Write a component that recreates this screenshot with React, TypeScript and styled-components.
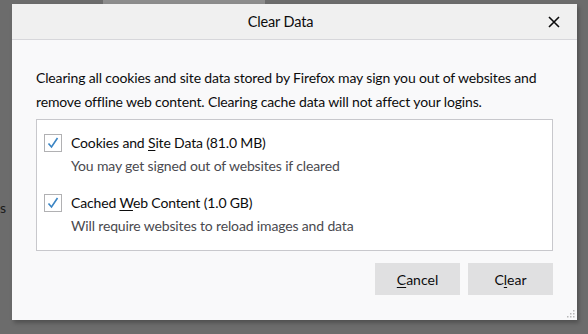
import React from "react";
import styled, { createGlobalStyle } from "styled-components";

const GlobalStyle = createGlobalStyle`
  html, body {
    margin: 0;
    padding: 0;
    background: #6c6c6c;
    overflow: hidden;
  }
  body {
    font-family: Lato, "Open Sans", sans-serif;
    letter-spacing: -0.15px;
  }
`;

const Page = styled.div`
  width: 588px;
  height: 334px;
  display: flex;
  flex-direction: column;
`;

const TopStrip = styled.div`
  height: 4px;
  display: flex;
  padding-left: 103px;
`;

const BehindButton = styled.div`
  width: 162px;
  height: 4px;
  background: #8d8d8d;
`;

const Row = styled.div`
  display: flex;
`;

const Gutter = styled.div`
  width: 12px;
  padding-top: 195px;
  color: #1a1a1a;
  font-size: 14px;
`;

const Dialog = styled.div`
  width: 565px;
  height: 316px;
  background: #f9f9fa;
  display: flex;
  flex-direction: column;
  box-shadow: 2px 3px 4px rgba(0, 0, 0, 0.25);
  position: relative;
`;

const Header = styled.div`
  flex-shrink: 0;
  height: 35px;
  padding-right: 28px;
  background: #f0f0f0;
  border-bottom: 1px solid #d7d7db;
  display: flex;
  align-items: center;
  justify-content: center;
  position: relative;
`;

const Title = styled.div`
  font-size: 14.5px;
  color: #0c0c0d;
`;

const CloseButton = styled.button`
  position: absolute;
  right: 15px;
  top: 10px;
  width: 16px;
  height: 16px;
  padding: 0;
  border: none;
  background: transparent;
  display: flex;
  align-items: center;
  justify-content: center;
`;

const Body = styled.div`
  padding: 26px 24px 0 24px;
  display: flex;
  flex-direction: column;
`;

const Description = styled.p`
  margin: 0;
  font-size: 14px;
  line-height: 24px;
  color: #0c0c0d;
`;

const OptionsBox = styled.div`
  margin-top: 5px;
  height: 132px;
  box-sizing: border-box;
  background: #fff;
  border: 1px solid #c8c8cc;
  padding: 13px 6px 0 6px;
  display: flex;
  flex-direction: column;
  gap: 14px;
`;

const Option = styled.div`
  display: grid;
  grid-template-columns: 28px 1fr;
`;

const Box = styled.div`
  width: 18px;
  height: 18px;
  margin-left: 1px;
  margin-top: 1px;
  border: 1px solid #b1b1b3;
  box-sizing: border-box;
  background: #fff;
  display: flex;
  align-items: center;
  justify-content: center;
`;

const Label = styled.div`
  font-size: 14px;
  line-height: 20px;
  color: #0c0c0d;
`;

const Hint = styled.div`
  grid-column: 2;
  font-size: 14px;
  line-height: 26px;
  color: #4a4a4f;
`;

const Key = styled.span`
  text-decoration: underline;
  text-underline-offset: 2px;
`;

const Actions = styled.div`
  display: flex;
  justify-content: flex-end;
  gap: 8px;
  padding-top: 12px;
`;

const ActionButton = styled.button`
  width: 85px;
  height: 32px;
  border: none;
  background: #e0e0e1;
  font: inherit;
  font-size: 14px;
  color: #0c0c0d;
  padding: 0;
`;

const Grip = styled.svg`
  position: absolute;
  right: 2px;
  bottom: 2px;
`;

const Check = () => (
  <Box>
    <svg width="14" height="14" viewBox="0 0 14 14">
      <path d="M2.5 7.5 L5.5 11 L11.5 2" fill="none" stroke="#3b85c4" strokeWidth="1.6" />
    </svg>
  </Box>
);

export default function App() {
  return (
    <Page>
      <GlobalStyle />
      <TopStrip>
        <BehindButton />
      </TopStrip>
      <Row>
        <Gutter>s</Gutter>
        <Dialog>
          <Header>
            <Title>Clear Data</Title>
            <CloseButton aria-label="Close">
              <svg width="12" height="12" viewBox="0 0 12 12">
                <path d="M1 1 L11 11 M11 1 L1 11" stroke="#0c0c0d" strokeWidth="1.6" />
              </svg>
            </CloseButton>
          </Header>
          <Body>
            <Description>
              Clearing all cookies and site data stored by Firefox may sign you out of websites and
              remove offline web content. Clearing cache data will not affect your logins.
            </Description>
            <OptionsBox>
              <Option>
                <Check />
                <Label>
                  Cookies and <Key>S</Key>ite Data (81.0 MB)
                </Label>
                <Hint>You may get signed out of websites if cleared</Hint>
              </Option>
              <Option>
                <Check />
                <Label>
                  Cached <Key>W</Key>eb Content (1.0 GB)
                </Label>
                <Hint>Will require websites to reload images and data</Hint>
              </Option>
            </OptionsBox>
            <Actions>
              <ActionButton>
                <Key>C</Key>ancel
              </ActionButton>
              <ActionButton>
                C<Key>l</Key>ear
              </ActionButton>
            </Actions>
          </Body>
          <Grip width="10" height="10" viewBox="0 0 10 10">
            <g fill="#b8b8b8">
              <rect x="8" y="2" width="1.5" height="1.5" />
              <rect x="5" y="5" width="1.5" height="1.5" />
              <rect x="8" y="5" width="1.5" height="1.5" />
              <rect x="2" y="8" width="1.5" height="1.5" />
              <rect x="5" y="8" width="1.5" height="1.5" />
              <rect x="8" y="8" width="1.5" height="1.5" />
            </g>
          </Grip>
        </Dialog>
      </Row>
    </Page>
  );
}
